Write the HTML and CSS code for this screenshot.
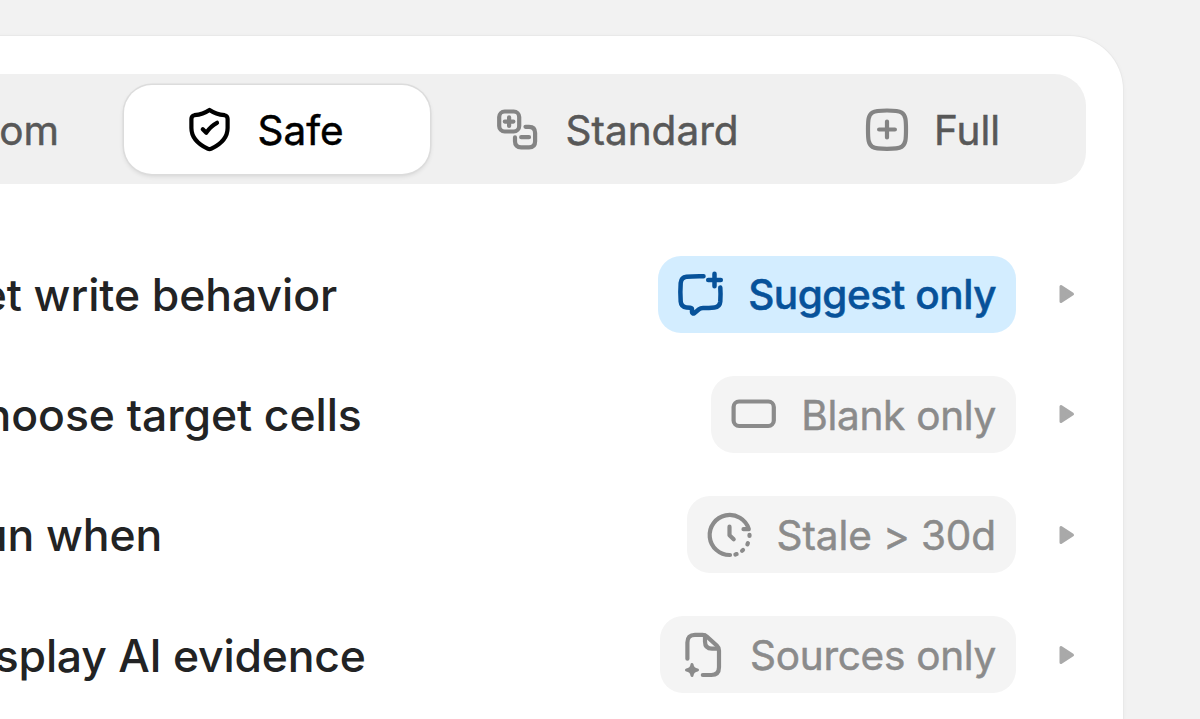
FILE: index.html
```html
<!DOCTYPE html>
<html lang="en">
<head>
    <meta charset="UTF-8">
    <meta name="viewport" content="width=device-width, initial-scale=1.0">
    <title>AI permissions</title>
    <link rel="stylesheet" href="styles.css">
</head>
<body>
    <main class="panel">
        <nav class="tabs">
            <button class="tab custom"><span>Custom</span></button>
            <button class="tab safe active">
                <svg class="icon" viewBox="0 0 50 50">
                    <path d="M24.5 4.9C19.5 8.3 14.5 9.6 9.4 10.2Q6.4 10.8 6.4 14V23C6.4 33.5 14.5 39.8 22.6 43.7Q24.5 44.7 26.4 43.7C34.5 39.8 42.6 33.5 42.6 23V14Q42.6 10.8 39.6 10.2C34.5 9.6 29.5 8.3 24.5 4.9Z"/>
                    <path d="M17.8 24.2L21.3 27.7Q25.5 21.2 32 17.8"/>
                </svg>
                <span>Safe</span>
            </button>
            <button class="tab standard">
                <svg class="icon" viewBox="0 0 50 50">
                    <rect x="6.2" y="6.5" width="20" height="20" rx="5.5"/>
                    <path d="M16.1 12.3V20.9M11.8 16.6H20.4"/>
                    <path d="M32.5 21.8H36Q42.1 21.8 42.1 28V36.2Q42.1 42.4 36 42.4H28.2Q22 42.4 22 36.2V32.4M28.2 32.2H36"/>
                </svg>
                <span>Standard</span>
            </button>
            <button class="tab full">
                <svg class="icon" viewBox="0 0 50 50">
                    <path d="M25 5.5C33 5.5 36.5 5.6 39.5 7.5C43.8 10.2 44 15 44 24.6S43.8 39 39.5 41.9C36.5 43.7 33 43.8 25 43.8S13.5 43.7 10.5 41.9C6.2 39 6 34.2 6 24.6S6.2 10.2 10.5 7.5C13.5 5.6 17 5.5 25 5.5Z"/>
                    <path d="M25 16.6V32.4M17.1 24.5H32.9"/>
                </svg>
                <span>Full</span>
            </button>
        </nav>

        <div class="rows">
            <div class="row">
                <span class="label">Set write behavior</span>
                <button class="pill blue">
                    <svg class="icon" viewBox="0 0 50 50">
                        <path d="M28.5 7.2Q18 7 11.5 7.8Q6.2 8.5 5.7 14Q5 23 5.7 32.5Q6.2 38 11.5 38.5L15.2 38.8Q17 39 17 40.5V43Q17.2 45.5 19.5 44L24 40.2Q25.5 39 28 39Q34 39 39.5 38.4Q44.8 37.9 45.3 32.5Q45.8 25 45.3 18.6"/>
                        <path d="M39.5 4.7V17.3M33.2 11H45.8"/>
                    </svg>
                    <span>Suggest only</span>
                </button>
                <svg class="arrow" viewBox="0 0 16 20"><path d="M2 2.5V17.5L13.5 10Z"/></svg>
            </div>
            <div class="row">
                <span class="label">Choose target cells</span>
                <button class="pill">
                    <svg class="icon" viewBox="0 0 50 50">
                        <rect x="5.6" y="12.5" width="40.2" height="24.5" rx="5.5"/>
                    </svg>
                    <span>Blank only</span>
                </button>
                <svg class="arrow" viewBox="0 0 16 20"><path d="M2 2.5V17.5L13.5 10Z"/></svg>
            </div>
            <div class="row">
                <span class="label">Run when</span>
                <button class="pill stale">
                    <svg class="icon" viewBox="0 0 50 50">
                        <path d="M26 45A20 20 0 1 1 44.8 19.2H39.5"/>
                        <path d="M25.5 16.7V25.3L29.7 29.3"/>
                        <path d="M45.5 24.8V26M43.9 33.2L43.4 34.3M39 40L38.1 40.8M32.6 44.1L31.4 44.5"/>
                    </svg>
                    <span>Stale &gt; 30d</span>
                </button>
                <svg class="arrow" viewBox="0 0 16 20"><path d="M2 2.5V17.5L13.5 10Z"/></svg>
            </div>
            <div class="row">
                <span class="label">Display AI evidence</span>
                <button class="pill">
                    <svg class="icon" viewBox="0 0 50 50">
                        <path d="M10.4 28.7V12.5Q10.4 4.8 18 4.8H25.5Q28 4.8 29.8 6.5L40 15.8Q42 17.6 42 20.5V37.3Q42 45 34.3 45H25.8"/>
                        <path d="M28 5.5V11.5Q28 18.7 35 18.7H41"/>
                        <path class="solid" d="M15 34.5Q15.7 39.3 20.5 40Q15.7 40.7 15 45.5Q14.3 40.7 9.5 40Q14.3 39.3 15 34.5Z"/>
                    </svg>
                    <span>Sources only</span>
                </button>
                <svg class="arrow" viewBox="0 0 16 20"><path d="M2 2.5V17.5L13.5 10Z"/></svg>
            </div>
        </div>
    </main>
</body>
</html>
```
FILE: styles.css
```css
* {
    margin: 0;
    padding: 0;
    box-sizing: border-box;
    font-family: Inter, sans-serif;
}

body {
    height: 100vh;
    overflow: hidden;
    padding-top: 36px;
    background: #f2f2f2;
}

.panel {
    width: 1223px;
    height: 100%;
    margin-left: -100px;
    padding: 38px 37px 0;
    background: #fff;
    border-radius: 54px 54px 0 0;
    box-shadow: 0 0 0 1px #e9e9e9, 0 1px 5px #0000000d;
}

button {
    border: none;
    background: none;
    font-weight: 400;
    cursor: pointer;
    white-space: nowrap;
}

button span,
.label {
    padding-top: 1.6px;
}

.tabs {
    display: flex;
    height: 110px;
    padding: 11px;
    background: #f0f0f0;
    border-radius: 32px;
}

.tab {
    display: flex;
    align-items: center;
    gap: 22.5px;
    height: 89px;
    font-size: 40.5px;
    -webkit-text-stroke: 0.5px;
    color: #585858;
}

.tab .icon {
    color: #848484;
}

.custom {
    width: 176px;
    padding-right: 65px;
    justify-content: flex-end;
}

.safe {
    width: 306px;
    padding-left: 61px;
}

.standard {
    width: 369px;
    padding-left: 63px;
}

.full {
    padding-left: 62.5px;
}

.active {
    background: #fff;
    color: #000;
    border-radius: 28px;
    box-shadow: 0 0 0 1.5px #dcdcdc, 0 2px 5px #0000001f;
}

.active .icon {
    color: #000;
}

.icon {
    width: 50px;
    height: 50px;
    flex-shrink: 0;
    fill: none;
    stroke: currentColor;
    stroke-width: 4.2;
    stroke-linecap: round;
    stroke-linejoin: round;
}

.icon .solid {
    fill: currentColor;
    stroke-width: 3;
}

.rows {
    display: flex;
    flex-direction: column;
    gap: 43.5px;
    padding: 71.6px 11px 0 15px;
}

.row {
    display: flex;
    align-items: center;
    height: 76.8px;
}

.label {
    flex: 1;
    font-size: 44.5px;
    font-weight: 500;
    letter-spacing: -0.07px;
    color: #222324;
    white-space: nowrap;
}

.row:last-child .label {
    letter-spacing: -0.23px;
}

.pill {
    display: flex;
    align-items: center;
    gap: 23px;
    height: 77px;
    padding: 0 20px 0 17px;
    border-radius: 23px;
    background: #f4f4f4;
    font-size: 40.5px;
    letter-spacing: -0.28px;
    -webkit-text-stroke: 0.5px;
    color: #8b8b8b;
}

.stale {
    letter-spacing: -0.1px;
}

.blue {
    background: #d3edff;
    color: #07529a;
    font-weight: 500;
    letter-spacing: -0.47px;
}

.blue .icon {
    stroke-width: 4.5;
}

.arrow {
    width: 16px;
    height: 20px;
    margin-left: 43px;
    fill: #a9a9a9;
    stroke: #a9a9a9;
    stroke-width: 3;
    stroke-linejoin: round;
}
```
